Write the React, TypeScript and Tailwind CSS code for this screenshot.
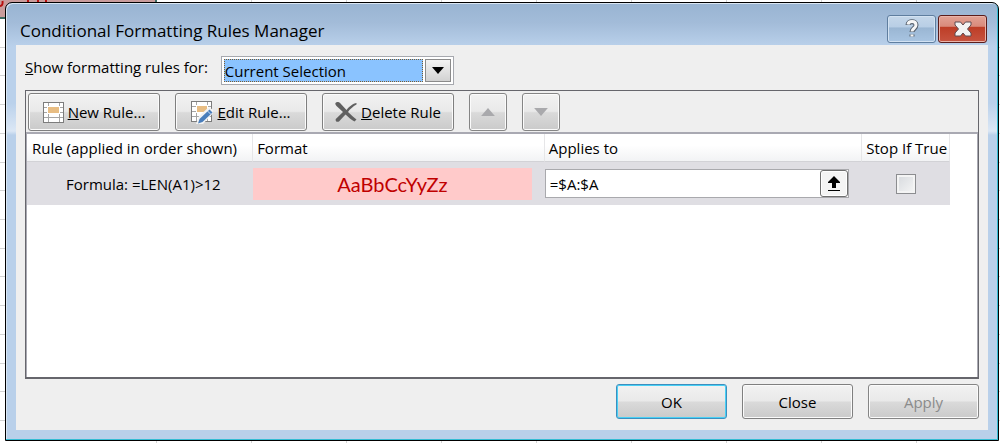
import { useState } from "react";
import type { ReactNode } from "react";
import { cva } from "class-variance-authority";
import { clsx } from "clsx";

const sheetRows = Array.from({ length: 14 }, (_, i) => i);
const sheetCols = Array.from({ length: 8 }, (_, i) => i);

const button = cva(
  "flex items-center justify-center rounded-[3px] border bg-[linear-gradient(#f2f2f2,#e9e9e9_48%,#dadada_52%,#cacaca)] whitespace-nowrap",
  {
    variants: {
      kind: {
        tool: "h-[38px] w-[132px] gap-1 border-[#7f7f7f] shadow-[inset_0_0_0_1px_#fbfbfb]",
        arrow: "h-[38px] w-[38px] border-[#858585] shadow-[inset_0_0_0_1px_#fbfbfb]",
        footer: "h-[35px] w-[111px] border-[#7f7f7f] shadow-[inset_0_0_0_1px_#fbfbfb]",
        primary: "h-[35px] w-[111px] border-[#3c8fbf] shadow-[inset_0_0_0_1px_#48d0f5]",
        disabled: "h-[35px] w-[111px] border-[#858585] text-[#8b8b8b] shadow-[inset_0_0_0_1px_#fbfbfb]",
      },
    },
  }
);

function RuleGrid() {
  return (
    <>
      <rect x="0.5" y="0.5" width="20" height="20" fill="#fff" stroke="#7c7c7c" />
      <path d="M5.5 1v19M16.5 1v19M1 5.5h19M1 10.5h19M1 15.5h19" stroke="#a5a5a5" fill="none" />
    </>
  );
}

function NewRuleIcon() {
  return (
    <svg width="21" height="21" viewBox="0 0 21 21" aria-hidden="true">
      <RuleGrid />
      <rect x="4" y="4" width="13" height="8" fill="#fff" />
      <rect x="5" y="5" width="11" height="6" fill="#e8bd83" />
    </svg>
  );
}

function EditRuleIcon() {
  return (
    <svg width="22" height="23" viewBox="0 0 22 23" aria-hidden="true">
      <RuleGrid />
      <rect x="5" y="4" width="12" height="8" fill="#fff" />
      <rect x="6" y="5" width="10" height="6" fill="#e8bd83" />
      <path d="M5 23l3-8L18 6l4 3v3L12 23z" fill="#f3f3f3" />
      <path d="M7 22.500l1.500-4.500L18.500 8.500l3 3L11.500 21z" fill="#4a7ebb" />
      <path d="M16.500 10l3.500 3.500" stroke="#cfdff2" />
    </svg>
  );
}

function DeleteIcon() {
  return (
    <svg width="22" height="20" viewBox="0 0 22 20" aria-hidden="true">
      <path
        d="M.5 1c1-1.500 4-1 5 .5l6 6.500C14 4.500 18 1.500 21.500 1v1.500C18 4.500 15 7 13 10c3 3 5.500 5 8.500 7.500l-2 2C16 17.500 13 15 10.500 12.500L4 19.500C2 20.500 0 19 .8 17L8 10 1.500 4C.5 3 0 2 .5 1z"
        fill="#606060"
      />
    </svg>
  );
}

function Triangle({ down = false, className }: { down?: boolean; className: string }) {
  return (
    <svg viewBox="0 0 12 7" className={className} aria-hidden="true">
      <path d={down ? "M0 0h12L6 7z" : "M0 7h12L6 0z"} fill="currentColor" />
    </svg>
  );
}

function RangeIcon() {
  return (
    <svg width="12" height="15" viewBox="0 0 12 15" aria-hidden="true">
      <path d="M6 0l6 6v1H8v5H4V7H0V6zM0 14h12v1H0z" fill="#000" />
    </svg>
  );
}

function Sheet() {
  return (
    <div className="absolute inset-0 flex flex-col bg-white pb-[22px]" aria-hidden="true">
      <div className="absolute inset-0 flex">
        <div className="w-[157px] border-r border-[#d4d4d4]" />
        {sheetCols.map((col) => (
          <div key={col} className="w-[95px] border-r border-[#d4d4d4]" />
        ))}
      </div>
      <div className="relative h-[19px] w-[157px] border-r-2 border-b-2 border-[#3d6b63] bg-[#c99c9c]">
        <svg width="60" height="8" viewBox="0 0 60 8" className="block">
          <path d="M0 6c2 0 3-1.500 2.500-5M28 0v2M38 0v2M46 0v2" fill="none" stroke="#b8100f" strokeWidth="2" />
        </svg>
      </div>
      {sheetRows.map((row) => (
        <div key={row} className="relative flex-1 border-b border-[#d4d4d4]" />
      ))}
    </div>
  );
}

function TitleBar() {
  return (
    <header className="flex h-[42px] items-start justify-between pr-px pl-1">
      <h1 className="pt-4 text-[17px] leading-6">Conditional Formatting Rules Manager</h1>
      <div className="flex gap-[2px] pt-3">
        <button
          type="button"
          aria-label="Help"
          className="flex h-7 w-[49px] items-center justify-center rounded-[3px] border border-[#5f7e9f] bg-[linear-gradient(#c5d7ea,#b8cee5_42%,#9ab6d3_46%,#a9c5e2)] shadow-[inset_0_0_0_1px_#d3e2f2]"
        >
          <svg width="14" height="20" viewBox="0 0 14 20" aria-hidden="true">
            <path d="M3 6c0-4.500 8-4.500 8 0 0 3.500-4 3.500-4 7M7 15.500v2" fill="none" stroke="#55606d" strokeWidth="5" />
            <path d="M3 5.500c.5-4 8-4 8 .5 0 3.500-4 3.500-4 6.500M7 15.500v2" fill="none" stroke="#f6f6f6" strokeWidth="3" />
          </svg>
        </button>
        <button
          type="button"
          aria-label="Close window"
          className="flex h-7 w-[49px] items-center justify-center rounded-[3px] border border-[#5b1d1b] bg-[linear-gradient(#e2a295,#d98a7b_40%,#bd3d26_42%,#c75440)] shadow-[inset_0_0_0_1px_#eab4aa]"
        >
          <svg width="18" height="16" viewBox="0 0 18 16" aria-hidden="true">
            <path
              d="M1 1h5.500L9 4l2.500-3H17v3l-3.500 4 3.500 4v3h-5.500L9 12l-2.500 3H1v-3l3.500-4L1 4z"
              fill="#f3f3f3"
              stroke="#5d4a50"
              strokeLinejoin="round"
            />
          </svg>
        </button>
      </div>
    </header>
  );
}

function HeaderCell({ children, className }: { children: ReactNode; className: string }) {
  return (
    <th
      scope="col"
      className={clsx(
        "h-7 border-r border-b border-r-[#e6e6e8] border-b-[#d2d2d6] text-left font-normal whitespace-nowrap",
        className
      )}
    >
      {children}
    </th>
  );
}

function RulesTable() {
  const [range, setRange] = useState("=$A:$A");
  const [stop, setStop] = useState(false);

  return (
    <table className="w-full table-fixed border-separate border-spacing-0">
      <colgroup>
        <col className="w-[24.5%]" />
        <col className="w-[31.6%]" />
        <col className="w-[34.4%]" />
        <col />
      </colgroup>
      <thead className="bg-linear-to-b from-white from-40% to-[#f1f2f4]">
        <tr>
          <HeaderCell className="pl-[5px]">Rule (applied in order shown)</HeaderCell>
          <HeaderCell className="pl-1">Format</HeaderCell>
          <HeaderCell className="pl-1">Applies to</HeaderCell>
          <HeaderCell className="pl-1">Stop If True</HeaderCell>
        </tr>
      </thead>
      <tbody>
        <tr className="bg-[#dfdee3]">
          <td className="h-[43px] pl-[39px] whitespace-nowrap">Formula: =LEN(A1)&gt;12</td>
          <td className="p-0">
            <div className="mr-[13px] flex h-8 items-center justify-center bg-[#ffcaca] font-[Lato,sans-serif] text-[20px] text-[#c00000]">
              AaBbCcYyZz
            </div>
          </td>
          <td className="p-0">
            <div className="mr-[13px] flex h-[29px] border border-[#a9a9ad] bg-white">
              <input
                aria-label="Applies to"
                value={range}
                onChange={(e) => setRange(e.target.value)}
                className="min-w-0 flex-1 pl-1 outline-none"
              />
              <button
                type="button"
                aria-label="Select range"
                className="flex w-7 items-center justify-center rounded-[3px] border border-[#707070] bg-[#f4f4f4] shadow-[inset_0_0_0_1px_#fff]"
              >
                <RangeIcon />
              </button>
            </div>
          </td>
          <td className="p-0">
            <input
              type="checkbox"
              aria-label="Stop If True"
              checked={stop}
              onChange={(e) => setStop(e.target.checked)}
              className="mx-auto block h-5 w-5 appearance-none border border-[#8c8d90] bg-linear-to-br from-[#d6d9dd] to-[#f6f6f6] shadow-[inset_0_0_0_2px_#f4f4f4] checked:bg-[#4a7ebb]"
            />
          </td>
        </tr>
      </tbody>
    </table>
  );
}

export default function App() {
  const [scope, setScope] = useState("Current Selection");

  return (
    <div className="relative pt-[2px] pr-px pb-[2px] pl-[5px] font-['Open_Sans',sans-serif] text-[15px] leading-5 text-black">
      <Sheet />
      <main className="relative rounded-t-[7px] border border-black bg-[linear-gradient(#98b4d2,#a3bcd9_20px,#bad1eb_44px,#bad1eb_100px,#dbe7f5_128px,#b9d0ea_132px)] px-[10px] pb-[10px] shadow-[inset_-1px_-1px_0_#34bcd3,inset_1px_1px_0_#d9e6f3]">
        <TitleBar />
        <div className="bg-[#efefef] px-[9px] pb-[11px]">
          <div className="flex items-start pt-[11px] pb-[5px]">
            <label htmlFor="scope" className="pt-px whitespace-nowrap">
              <u>S</u>how formatting rules for:
            </label>
            <div className="ml-[13px] flex h-[29px] w-[233px] gap-[2px] border border-[#a6a8ae] bg-white p-[2px]">
              <select
                id="scope"
                value={scope}
                onChange={(e) => setScope(e.target.value)}
                className="min-w-0 flex-1 appearance-none border border-dotted border-[#7b5c30] bg-[#8ac3ff] outline-none"
              >
                <option>Current Selection</option>
                <option>This Worksheet</option>
              </select>
              <span className="pointer-events-none flex w-[26px] items-center justify-center border border-[#8b8b8b] bg-linear-to-b from-[#f3f3f3] to-[#d2d2d2]">
                <Triangle down className="h-[7px] w-3 text-black" />
              </span>
            </div>
          </div>
          <section className="border border-b-2 border-[#66666c]">
            <div className="flex gap-[15px] p-[2px] pb-px">
              <button type="button" className={button({ kind: "tool" })}>
                <NewRuleIcon />
                <span><u>N</u>ew Rule...</span>
              </button>
              <button type="button" className={button({ kind: "tool" })}>
                <EditRuleIcon />
                <span><u>E</u>dit Rule...</span>
              </button>
              <button type="button" className={button({ kind: "tool" })}>
                <DeleteIcon />
                <span><u>D</u>elete Rule</span>
              </button>
              <button type="button" disabled aria-label="Move up" className={button({ kind: "arrow" })}>
                <Triangle className="h-2 w-[14px] text-[#a9a9ac]" />
              </button>
              <button type="button" disabled aria-label="Move down" className={button({ kind: "arrow" })}>
                <Triangle down className="h-2 w-[14px] text-[#a9a9ac]" />
              </button>
            </div>
            <div className="min-h-[245px] border-t-2 border-r border-l border-[#a9a9b2] bg-white pr-[27px]">
              <RulesTable />
            </div>
          </section>
          <footer className="flex justify-end gap-[15px] pt-[5px]">
            <button type="button" className={button({ kind: "primary" })}>OK</button>
            <button type="button" className={button({ kind: "footer" })}>Close</button>
            <button type="button" disabled className={button({ kind: "disabled" })}>Apply</button>
          </footer>
        </div>
      </main>
    </div>
  );
}
